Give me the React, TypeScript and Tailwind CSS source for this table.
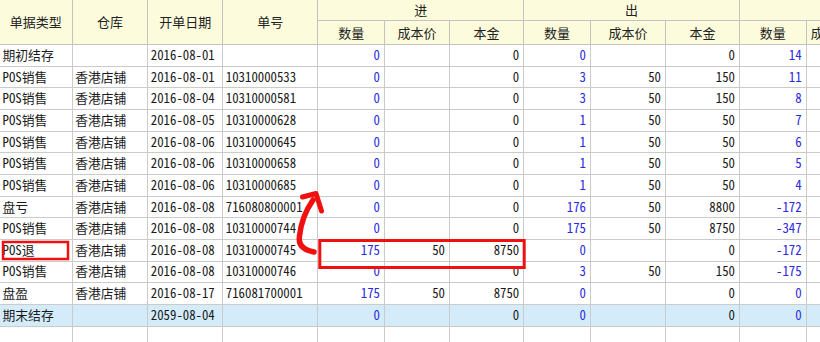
import React from 'react';

type Row = {
  type: string;
  store: string;
  date: string;
  no: string;
  inQty: string;
  inPrice: string;
  inAmt: string;
  outQty: string;
  outPrice: string;
  outAmt: string;
  qty: string;
  total?: boolean;
};

const rows: Row[] = [
  { type: '期初结存', store: '', date: '2016-08-01', no: '', inQty: '0', inPrice: '', inAmt: '0', outQty: '0', outPrice: '', outAmt: '0', qty: '14' },
  { type: 'POS销售', store: '香港店铺', date: '2016-08-01', no: '10310000533', inQty: '0', inPrice: '', inAmt: '0', outQty: '3', outPrice: '50', outAmt: '150', qty: '11' },
  { type: 'POS销售', store: '香港店铺', date: '2016-08-04', no: '10310000581', inQty: '0', inPrice: '', inAmt: '0', outQty: '3', outPrice: '50', outAmt: '150', qty: '8' },
  { type: 'POS销售', store: '香港店铺', date: '2016-08-05', no: '10310000628', inQty: '0', inPrice: '', inAmt: '0', outQty: '1', outPrice: '50', outAmt: '50', qty: '7' },
  { type: 'POS销售', store: '香港店铺', date: '2016-08-06', no: '10310000645', inQty: '0', inPrice: '', inAmt: '0', outQty: '1', outPrice: '50', outAmt: '50', qty: '6' },
  { type: 'POS销售', store: '香港店铺', date: '2016-08-06', no: '10310000658', inQty: '0', inPrice: '', inAmt: '0', outQty: '1', outPrice: '50', outAmt: '50', qty: '5' },
  { type: 'POS销售', store: '香港店铺', date: '2016-08-06', no: '10310000685', inQty: '0', inPrice: '', inAmt: '0', outQty: '1', outPrice: '50', outAmt: '50', qty: '4' },
  { type: '盘亏', store: '香港店铺', date: '2016-08-08', no: '716080800001', inQty: '0', inPrice: '', inAmt: '0', outQty: '176', outPrice: '50', outAmt: '8800', qty: '-172' },
  { type: 'POS销售', store: '香港店铺', date: '2016-08-08', no: '10310000744', inQty: '0', inPrice: '', inAmt: '0', outQty: '175', outPrice: '50', outAmt: '8750', qty: '-347' },
  { type: 'POS退', store: '香港店铺', date: '2016-08-08', no: '10310000745', inQty: '175', inPrice: '50', inAmt: '8750', outQty: '0', outPrice: '', outAmt: '0', qty: '-172' },
  { type: 'POS销售', store: '香港店铺', date: '2016-08-08', no: '10310000746', inQty: '0', inPrice: '', inAmt: '0', outQty: '3', outPrice: '50', outAmt: '150', qty: '-175' },
  { type: '盘盈', store: '香港店铺', date: '2016-08-17', no: '716081700001', inQty: '175', inPrice: '50', inAmt: '8750', outQty: '0', outPrice: '', outAmt: '0', qty: '0' },
  { type: '期末结存', store: '', date: '2059-08-04', no: '', inQty: '0', inPrice: '', inAmt: '0', outQty: '0', outPrice: '', outAmt: '0', qty: '0', total: true },
];

const Head = ({ children, className = '' }: { children?: React.ReactNode; className?: string }) => (
  <div className={`flex items-center justify-center overflow-hidden whitespace-nowrap border-r border-b border-[#c2c2c2] bg-[#fcfcdc] text-[13px] text-[#222] ${className}`}>
    {children}
  </div>
);

const Cell = ({ children, num, blue, total }: { children?: React.ReactNode; num?: boolean; blue?: boolean; total?: boolean }) => (
  <div
    className={`flex items-center overflow-hidden whitespace-nowrap border-r border-b border-[#cbcbcb] ${
      num ? 'justify-end pr-1' : 'pl-[2.5px]'
    } ${blue ? 'text-[#2a2ae0]' : 'text-[#1a1a1a]'} ${total ? 'bg-[#d4ecfa]' : 'bg-white'}`}
  >
    {children}
  </div>
);

export default function App() {
  return (
    <div className="relative h-[342px] w-[820px] overflow-hidden bg-white font-['Noto_Sans_Mono_CJK_SC','Noto_Sans_CJK_SC','DejaVu_Sans_Mono',monospace] text-[12.8px] leading-none">
      <div className="grid w-[930px] grid-cols-[72.7px_75.6px_75px_95.2px_66.5px_65px_74.3px_66.7px_75px_74px_66.7px_48px_75px] grid-rows-[20.7px_24.3px_repeat(14,21.67px)]">
        <Head className="row-span-2">单据类型</Head>
        <Head className="row-span-2">仓库</Head>
        <Head className="row-span-2">开单日期</Head>
        <Head className="row-span-2">单号</Head>
        <Head className="col-span-3">进</Head>
        <Head className="col-span-3">出</Head>
        <Head className="col-span-3" />
        <Head>数量</Head>
        <Head>成本价</Head>
        <Head>本金</Head>
        <Head>数量</Head>
        <Head>成本价</Head>
        <Head>本金</Head>
        <Head>数量</Head>
        <Head>成本价</Head>
        <Head>本金</Head>

        {rows.map((r, i) => (
          <React.Fragment key={i}>
            <Cell total={r.total}>{r.type}</Cell>
            <Cell total={r.total}>{r.store}</Cell>
            <Cell total={r.total}>{r.date}</Cell>
            <Cell total={r.total}>{r.no}</Cell>
            <Cell num blue total={r.total}>{r.inQty}</Cell>
            <Cell num total={r.total}>{r.inPrice}</Cell>
            <Cell num total={r.total}>{r.inAmt}</Cell>
            <Cell num blue total={r.total}>{r.outQty}</Cell>
            <Cell num total={r.total}>{r.outPrice}</Cell>
            <Cell num total={r.total}>{r.outAmt}</Cell>
            <Cell num blue total={r.total}>{r.qty}</Cell>
            <Cell num total={r.total} />
            <Cell num total={r.total} />
          </React.Fragment>
        ))}

        {Array.from({ length: 13 }).map((_, i) => (
          <Cell key={`e${i}`} />
        ))}
      </div>

      {/* hand-drawn annotation */}
      <svg className="pointer-events-none absolute left-0 top-0" width="820" height="342" viewBox="0 0 820 342">
        <rect x="3" y="242" width="65" height="17" fill="none" stroke="#f01010" strokeWidth="2.5" />
        <rect x="319.8" y="240.5" width="204.4" height="27" fill="none" stroke="#f01010" strokeWidth="3" />
        <path
          d="M314 252 C303 250 298 245 299.5 236 C301 222 306 210 313 200"
          fill="none"
          stroke="#f01010"
          strokeWidth="5.5"
          strokeLinecap="round"
          strokeLinejoin="round"
        />
        <path
          d="M302.5 197 L316 193.5 L321.5 211"
          fill="none"
          stroke="#f01010"
          strokeWidth="5"
          strokeLinecap="round"
          strokeLinejoin="round"
        />
      </svg>
    </div>
  );
}
